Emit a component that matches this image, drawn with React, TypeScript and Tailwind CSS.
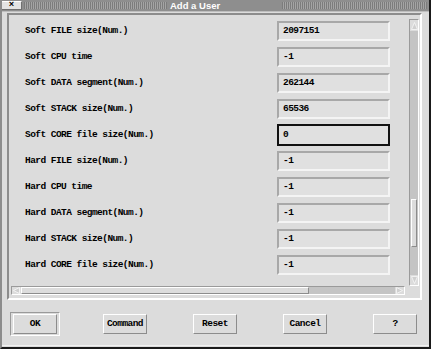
import React from "react";

const rows: { label: string; value: string; focused?: boolean }[] = [
  { label: "Soft FILE size(Num.)", value: "2097151" },
  { label: "Soft CPU time", value: "-1" },
  { label: "Soft DATA segment(Num.)", value: "262144" },
  { label: "Soft STACK size(Num.)", value: "65536" },
  { label: "Soft CORE file size(Num.)", value: "0", focused: true },
  { label: "Hard FILE size(Num.)", value: "-1" },
  { label: "Hard CPU time", value: "-1" },
  { label: "Hard DATA segment(Num.)", value: "-1" },
  { label: "Hard STACK size(Num.)", value: "-1" },
  { label: "Hard CORE file size(Num.)", value: "-1" },
];

const mono = { fontFamily: '"Liberation Mono", "DejaVu Sans Mono", monospace' };

function Btn({ label }: { label: string }) {
  return (
    <div className="w-[44px] h-[20px] bg-[#dcdcdc] border border-t-white border-l-white border-b-[#8c8c8c] border-r-[#8c8c8c] flex items-center justify-center text-[9.5px] font-bold tracking-[-0.55px] text-black leading-none">
      {label}
    </div>
  );
}

export default function App() {
  return (
    <div
      className="w-[431px] h-[349px] bg-[#dcdcdc] flex flex-col border-l-2 border-l-[#8c8c8c] border-r-2 border-r-[#1a1a1a] border-b-2 border-b-[#1a1a1a] overflow-hidden"
      style={mono}
    >
      {/* title bar */}
      <div className="h-[12px] flex items-stretch bg-[#8e8e8e] border-b border-b-[#bdbdbd]">
        <div className="w-[21px] my-[1px] -ml-[1px] bg-[#e4e4e4] border border-t-white border-l-white border-b-[#707070] border-r-[#707070] flex items-center justify-center text-[9px] font-bold leading-none text-black">
          ×
        </div>
        <div className="w-[143px] ml-[2px] my-[2px] bg-[repeating-linear-gradient(90deg,#7c7c7c_0_1px,#a4a4a4_1px_2px)]" />
        <div
          className="w-[115px] flex items-center pl-[3px] text-white text-[9.5px] font-bold leading-none"
          style={{ fontFamily: '"Liberation Sans", Arial, sans-serif' }}
        >
          Add a User
        </div>
        <div className="flex-1 my-[2px] mr-[2px] bg-[repeating-linear-gradient(90deg,#7c7c7c_0_1px,#a4a4a4_1px_2px)]" />
      </div>

      {/* scroll panel */}
      <div className="mt-[1px] ml-[5px] mr-[7px] h-[287px] border-2 border-t-[#8c8c8c] border-l-[#8c8c8c] border-b-white border-r-white flex">
        <div className="w-[398px] flex flex-col">
          <div className="flex-1 flex flex-col gap-[6px] pt-[6px]">
            {rows.map((r) => (
              <div key={r.label} className="h-[20px] flex items-center">
                <div className="w-[268px] pl-[16px] text-[9.5px] font-bold tracking-[-0.55px] text-black leading-none">
                  {r.label}
                </div>
                <div
                  className={
                    r.focused
                      ? "w-[113px] h-[22px] -my-[1px] bg-[#e0e0e0] border-2 border-[#111] flex items-center pl-[4px] text-[9.5px] font-bold tracking-[-0.55px] text-black leading-none"
                      : "w-[113px] h-[20px] bg-[#e0e0e0] border-2 border-t-[#a8a8a8] border-l-[#a8a8a8] border-b-[#f4f4f4] border-r-[#f4f4f4] flex items-center pl-[4px] text-[9.5px] font-bold tracking-[-0.55px] text-black leading-none"
                  }
                >
                  {r.value}
                </div>
              </div>
            ))}
          </div>
          {/* horizontal scrollbar */}
          <div className="h-[13px] pl-[2px] pb-[3px] flex items-end">
            <div className="w-[394px] h-[9px] bg-[#c4c4c4] border border-t-[#9a9a9a] border-l-[#9a9a9a] border-b-white border-r-white flex">
              <div className="w-[9px] h-full bg-[#dcdcdc] flex items-center justify-center">
                <svg width="7" height="7" viewBox="0 0 7 7">
                  <polygon points="0.5,3.5 6.5,0.5 6.5,6.5" fill="#d0d0d0" stroke="#f8f8f8" strokeWidth="0.8" />
                </svg>
              </div>
              <div className="w-[288px] h-full bg-[#dcdcdc] border border-t-white border-l-white border-b-[#8c8c8c] border-r-[#8c8c8c]" />
              <div className="flex-1" />
              <div className="w-[9px] h-full bg-[#dcdcdc] flex items-center justify-center">
                <svg width="7" height="7" viewBox="0 0 7 7">
                  <polygon points="6.5,3.5 0.5,0.5 0.5,6.5" fill="#d0d0d0" stroke="#f8f8f8" strokeWidth="0.8" />
                </svg>
              </div>
            </div>
          </div>
        </div>
        {/* vertical scrollbar */}
        <div className="w-[12px] pl-[2px] pt-[4px] pb-[12px] flex">
          <div className="w-[10px] h-full bg-[#c4c4c4] border border-t-[#9a9a9a] border-l-[#9a9a9a] border-b-white border-r-white flex flex-col">
            <div className="h-[11px] bg-[#dcdcdc] flex items-center justify-center">
              <svg width="7" height="8" viewBox="0 0 7 8">
                <polygon points="3.5,0.5 6.5,7.5 0.5,7.5" fill="#d0d0d0" stroke="#f8f8f8" strokeWidth="0.8" />
              </svg>
            </div>
            <div className="h-[168px]" />
            <div className="h-[48px] mx-[1px] bg-[#dcdcdc] border border-t-white border-l-white border-b-[#8c8c8c] border-r-[#8c8c8c]" />
            <div className="flex-1" />
            <div className="h-[10px] bg-[#dcdcdc] flex items-center justify-center">
              <svg width="7" height="8" viewBox="0 0 7 8">
                <polygon points="3.5,7.5 6.5,0.5 0.5,0.5" fill="#d0d0d0" stroke="#f8f8f8" strokeWidth="0.8" />
              </svg>
            </div>
          </div>
        </div>
      </div>

      {/* buttons */}
      <div className="flex-1 flex flex-col">
        <div className="mt-[12px] pl-[8px] flex gap-[40px]">
          <div className="w-[50px] h-[24px] border border-t-[#9a9a9a] border-l-[#9a9a9a] border-b-white border-r-white flex items-center justify-center">
            <Btn label="OK" />
          </div>
          {["Command", "Reset", "Cancel", "?"].map((b) => (
            <div key={b} className="w-[50px] h-[24px] flex items-center justify-center">
              <Btn label={b} />
            </div>
          ))}
        </div>
        <div className="flex-1" />
        <div className="h-[2px] border-t border-t-[#f0f0f0]" />
      </div>
    </div>
  );
}
